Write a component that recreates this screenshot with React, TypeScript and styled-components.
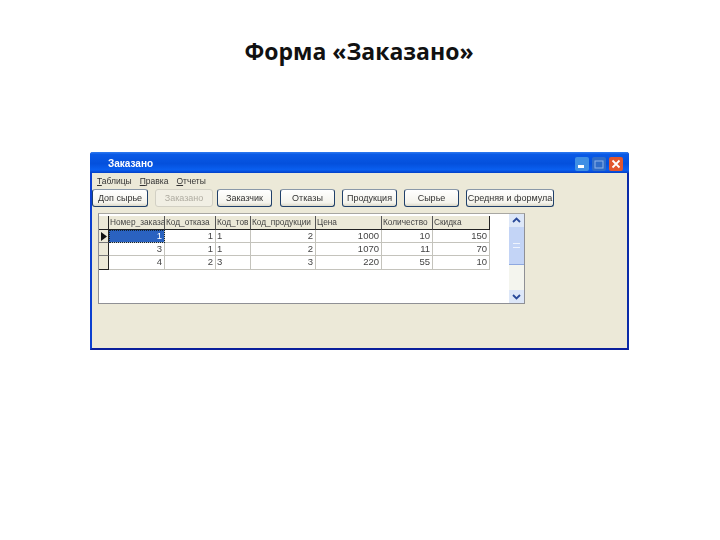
import React from "react";
import styled, { createGlobalStyle } from "styled-components";

const Global = createGlobalStyle`
  html, body { margin: 0; padding: 0; background: #fff; }
  #root { width: 720px; height: 540px; overflow: hidden; }
`;

const Slide = styled.div`
  width: 720px;
  height: 540px;
  background: #fff;
  display: flex;
  flex-direction: column;
  align-items: flex-start;
`;

const Heading = styled.h1`
  width: 100%;
  flex: none;
  margin: 0;
  padding: 37px 2px 0 0;
  height: 152px;
  box-sizing: border-box;
  text-align: center;
  font: 700 23px/28px "Open Sans", sans-serif;
  color: #111;
`;

const Win = styled.div`
  margin-left: 90px;
  width: 539px;
  height: 198px;
  box-sizing: border-box;
  display: flex;
  flex-direction: column;
  background: #ece9d8;
  border: 2px solid #0b3fd0;
  border-top: 0;
  border-bottom-color: #0a1f9c;
  border-right-color: #0a2aa8;
  border-radius: 3px 3px 0 0;
  font-family: "Liberation Sans", sans-serif;
  filter: blur(0.4px);
`;

const TitleBar = styled.div`
  height: 21px;
  flex: none;
  margin: 0 -2px;
  padding: 2px 6px 0 18px;
  box-sizing: border-box;
  display: flex;
  align-items: center;
  background: linear-gradient(180deg, #2f7bf0 0%, #0a5ae6 12%, #0450dc 55%, #0a5ff0 85%, #0340c8 100%);
  border-radius: 3px 3px 0 0;
`;

const TitleText = styled.span`
  flex: 1;
  font-size: 10px;
  font-weight: 700;
  color: #fff;
`;

const Ctl = styled.span<{ $kind: "min" | "max" | "close" }>`
  width: 14px;
  height: 14px;
  margin-left: 3px;
  border-radius: 2px;
  background: ${(p) => (p.$kind === "close" ? "#e2562e" : p.$kind === "min" ? "#3f8fe4" : "#2f6cc8")};
  display: flex;
  align-items: center;
  justify-content: center;
`;

const Menu = styled.div`
  height: 15px;
  flex: none;
  padding-left: 5px;
  display: flex;
  gap: 8px;
  align-items: center;
  font-size: 8.5px;
  color: #333;
  u { text-decoration: underline; }
`;

const Toolbar = styled.div`
  height: 25px;
  flex: none;
  padding: 1px 0 0 0;
  box-sizing: border-box;
  display: flex;
  align-items: flex-start;
`;

const Btn = styled.button<{ $w: number; $gap: number; $off?: boolean }>`
  width: ${(p) => p.$w}px;
  margin-left: ${(p) => p.$gap}px;
  height: 18px;
  padding: 0;
  box-sizing: border-box;
  border: 1px solid ${(p) => (p.$off ? "#d2d0c4" : "#20406a")};
  border-top-color: ${(p) => (p.$off ? "#d2d0c4" : "#8a98a8")};
  border-radius: 3px;
  background: ${(p) => (p.$off ? "#f1efe4" : "linear-gradient(180deg, #fff, #f4f3ec 80%, #dcd8c8)")};
  color: ${(p) => (p.$off ? "#b0ada2" : "#333")};
  font: 9px "Liberation Sans", sans-serif;
  white-space: nowrap;
`;

const Panel = styled.div`
  margin-left: 6px;
  width: 427px;
  height: 91px;
  box-sizing: border-box;
  background: #fff;
  border: 1px solid #8f9095;
  border-top-color: #a8a7a2;
  display: flex;
`;

const GridArea = styled.div`
  flex: 1;
  padding-top: 2px;
`;

const Table = styled.div`
  display: grid;
  grid-template-columns: 10px 56px 51px 35px 65px 66px 51px 57px;
  grid-template-rows: 14px 13px 13px 14px;
  width: 391px;
  font-size: 9.5px;
  color: #444;
`;

const Corner = styled.div`
  background: #ece9d8;
  border-right: 1px solid #222;
  border-bottom: 1px solid #222;
`;

const Head = styled.div<{ $last?: boolean }>`
  background: #ece9d8;
  border-right: 1px solid ${(p) => (p.$last ? "#222" : "#555")};
  border-bottom: 1px solid #222;
  padding-left: 1px;
  font-size: 8.3px;
  line-height: 13px;
  white-space: nowrap;
`;

const RowHead = styled.div<{ $last?: boolean }>`
  background: #ece9d8;
  border-right: 1px solid #222;
  border-bottom: 1px solid ${(p) => (p.$last ? "#222" : "#777")};
  display: flex;
  align-items: center;
  justify-content: center;
  svg { display: block; }
`;

const Cell = styled.div<{ $left?: boolean; $sel?: boolean }>`
  border-right: 1px solid #c4c3bc;
  border-bottom: 1px solid #c4c3bc;
  padding: 0 ${(p) => (p.$left ? "0 0 1px" : "2px 0 0")};
  text-align: ${(p) => (p.$left ? "left" : "right")};
  line-height: 12px;
  overflow: hidden;
  background: ${(p) => (p.$sel ? "#2a62c0" : "#fff")};
  color: ${(p) => (p.$sel ? "#fff" : "#444")};
  outline: ${(p) => (p.$sel ? "1px dotted #123" : "none")};
  outline-offset: -1px;
`;

const Scroll = styled.div`
  width: 15px;
  flex: none;
  margin-left: auto;
  background: #f4f5ee;
  display: flex;
  flex-direction: column;
`;

const Arrow = styled.div`
  height: 13px;
  flex: none;
  background: #dde7f8;
  box-sizing: border-box;
  display: flex;
  align-items: center;
  justify-content: center;
`;

const Thumb = styled.div`
  height: 37px;
  flex: none;
  background: #c3d4f6;
  border-bottom: 1px solid #8ea8e0;
  display: flex;
  align-items: center;
  justify-content: center;
  &::after {
    content: "";
    width: 7px;
    height: 3px;
    border-top: 1px solid #eef3fd;
    border-bottom: 1px solid #eef3fd;
  }
`;

const Spacer = styled.div`
  flex: 1;
`;

const heads = ["Номер_заказа", "Код_отказа", "Код_тов", "Код_продукции", "Цена", "Количество", "Скидка"];
const rows = [
  ["1", "1", "1", "2", "1000", "10", "150"],
  ["3", "1", "1", "2", "1070", "11", "70"],
  ["4", "2", "3", "3", "220", "55", "10"],
];
const buttons: { t: string; w: number; g: number; off?: boolean }[] = [
  { t: "Доп сырье", w: 56, g: 0 },
  { t: "Заказано", w: 58, g: 7, off: true },
  { t: "Заказчик", w: 55, g: 4 },
  { t: "Отказы", w: 55, g: 8 },
  { t: "Продукция", w: 55, g: 7 },
  { t: "Сырье", w: 55, g: 7 },
  { t: "Средняя и формула", w: 88, g: 7 },
];

const Chevron = ({ up }: { up?: boolean }) => (
  <svg width="9" height="7" viewBox="0 0 9 7">
    <path d={up ? "M1 5l3.5-3.5L8 5" : "M1 2l3.5 3.5L8 2"} fill="none" stroke="#2a4a9a" strokeWidth="1.8" />
  </svg>
);

export default function App() {
  return (
    <Slide>
      <Global />
      <Heading>Форма «Заказано»</Heading>
      <Win>
        <TitleBar>
          <TitleText>Заказано</TitleText>
          <Ctl $kind="min">
            <svg width="10" height="10" viewBox="0 0 10 10"><rect x="1" y="6" width="6" height="3" fill="#fff" /></svg>
          </Ctl>
          <Ctl $kind="max">
            <svg width="10" height="10" viewBox="0 0 10 10"><rect x="1" y="2" width="8" height="7" fill="none" stroke="#8fb2e8" /></svg>
          </Ctl>
          <Ctl $kind="close">
            <svg width="10" height="10" viewBox="0 0 10 10"><path d="M1.5 1.5l7 7M8.5 1.5l-7 7" stroke="#fff" strokeWidth="1.8" /></svg>
          </Ctl>
        </TitleBar>
        <Menu>
          <span><u>Т</u>аблицы</span>
          <span><u>П</u>равка</span>
          <span><u>О</u>тчеты</span>
        </Menu>
        <Toolbar>
          {buttons.map((b) => (
            <Btn key={b.t} $w={b.w} $gap={b.g} $off={b.off}>{b.t}</Btn>
          ))}
        </Toolbar>
        <Panel>
          <GridArea>
            <Table>
              <Corner />
              {heads.map((h, i) => (
                <Head key={h} $last={i === heads.length - 1}>{h}</Head>
              ))}
              {rows.map((r, ri) => (
                <React.Fragment key={ri}>
                  <RowHead $last={ri === 2}>
                    {ri === 0 && (
                      <svg width="6" height="9" viewBox="0 0 6 9"><path d="M0 0l6 4.5L0 9z" fill="#111" /></svg>
                    )}
                  </RowHead>
                  {r.map((c, ci) => (
                    <Cell key={ci} $left={ci === 2} $sel={ri === 0 && ci === 0}>{c}</Cell>
                  ))}
                </React.Fragment>
              ))}
            </Table>
          </GridArea>
          <Scroll>
            <Arrow><Chevron up /></Arrow>
            <Thumb />
            <Spacer />
            <Arrow><Chevron /></Arrow>
          </Scroll>
        </Panel>
      </Win>
    </Slide>
  );
}
